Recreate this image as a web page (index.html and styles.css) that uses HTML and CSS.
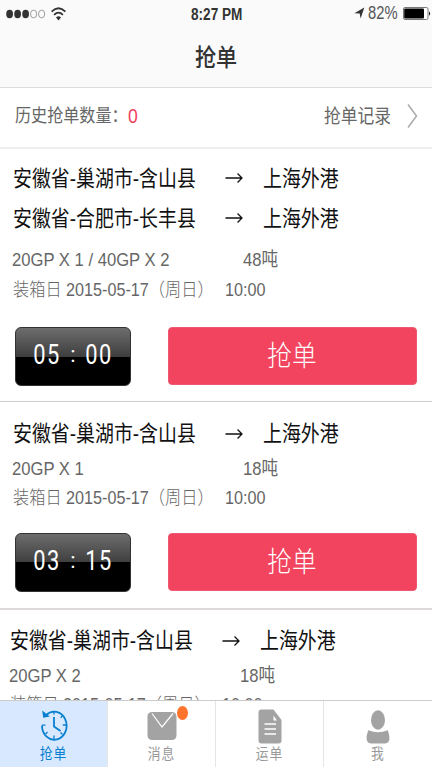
FILE: index.html
```html
<!DOCTYPE html>
<html lang="zh-CN">
<head>
<meta charset="utf-8">
<title>抢单</title>
<link rel="stylesheet" href="styles.css">
</head>
<body>
<div class="app">
  <header class="top">
    <div class="status">
      <div class="signal">
        <svg width="40" height="10" viewBox="0 0 40 10"><g fill="#333"><ellipse cx="3.6" cy="5" rx="3.4" ry="4.2"/><ellipse cx="11.6" cy="5" rx="3.4" ry="4.2"/><ellipse cx="19.6" cy="5" rx="3.4" ry="4.2"/></g><g fill="none" stroke="#777" stroke-width=".7"><ellipse cx="27.6" cy="5" rx="3.1" ry="3.9"/><ellipse cx="35.6" cy="5" rx="3.1" ry="3.9"/></g></svg>
        <svg class="wifi" width="15" height="14" viewBox="0 0 15 14"><g fill="none" stroke="#333" stroke-width="1.8"><path d="M.6 4.6Q7.5-2.2 14.4 4.6"/><path d="M3.1 7.8Q7.5 3.4 11.9 7.8"/></g><path d="M5 10.4Q7.5 8.3 10 10.4L7.5 13.6Z" fill="#333"/></svg>
      </div>
      <div class="clock"><span class="t">8:27 PM</span></div>
      <div class="power">
        <svg width="11" height="12" viewBox="0 0 11 12"><path d="M.4 6.2 10.3.5 6.6 11.5 5.7 6.4Z" fill="#333"/></svg>
        <span class="t percent">82%</span>
        <svg class="battery" width="28" height="13" viewBox="0 0 28 13"><rect x=".5" y=".5" width="24.5" height="12" rx="1.5" fill="#fff" stroke="#777"/><rect x="1.2" y="1.4" width="19.8" height="10.2" rx="1"/><path d="M26 4.2Q28.2 6.5 26 8.8Z" fill="#111"/></svg>
      </div>
    </div>
    <h1><span class="t">抢单</span></h1>
  </header>
  <section class="history">
    <span class="t count">历史抢单数量：</span><b class="t">0</b>
    <span class="t record">抢单记录</span>
    <svg width="11" height="26" viewBox="0 0 11 26"><path d="M1 1.5 9.5 13 1 24.5" fill="none" stroke="#aaa" stroke-width="1.5"/></svg>
  </section>
  <main>
    <article class="card first">
      <div class="route"><span class="t">安徽省-巢湖市-含山县</span><svg width="18" height="12" viewBox="0 0 18 12"><path d="M.5 6H17M12.5 1.5 17 6 12.5 10.5" fill="none" stroke="#111" stroke-width="1.3"/></svg><span class="t">上海外港</span></div>
      <div class="route"><span class="t">安徽省-合肥市-长丰县</span><svg width="18" height="12" viewBox="0 0 18 12"><path d="M.5 6H17M12.5 1.5 17 6 12.5 10.5" fill="none" stroke="#111" stroke-width="1.3"/></svg><span class="t">上海外港</span></div>
      <div class="load"><span class="t">20GP X 1 / 40GP X 2</span><span class="t">48吨</span></div>
      <div class="date"><span class="t">装箱日 2015-05-17（周日）</span><span class="t">10:00</span></div>
      <div class="actions"><div class="timer"><span>05</span><i>:</i><span>00</span></div><button><span class="t">抢单</span></button></div>
    </article>
    <article class="card">
      <div class="route"><span class="t">安徽省-巢湖市-含山县</span><svg width="18" height="12" viewBox="0 0 18 12"><path d="M.5 6H17M12.5 1.5 17 6 12.5 10.5" fill="none" stroke="#111" stroke-width="1.3"/></svg><span class="t">上海外港</span></div>
      <div class="load"><span class="t">20GP X 1</span><span class="t">18吨</span></div>
      <div class="date"><span class="t">装箱日 2015-05-17（周日）</span><span class="t">10:00</span></div>
      <div class="actions"><div class="timer"><span>03</span><i>:</i><span>15</span></div><button><span class="t">抢单</span></button></div>
    </article>
    <article class="card last">
      <div class="route"><span class="t">安徽省-巢湖市-含山县</span><svg width="18" height="12" viewBox="0 0 18 12"><path d="M.5 6H17M12.5 1.5 17 6 12.5 10.5" fill="none" stroke="#111" stroke-width="1.3"/></svg><span class="t">上海外港</span></div>
      <div class="load"><span class="t">20GP X 2</span><span class="t">18吨</span></div>
      <div class="date"><span class="t">装箱日 2015-05-17（周日）</span><span class="t">10:00</span></div>
    </article>
  </main>
  <nav>
    <a class="tab active"><svg width="28" height="32" viewBox="0 0 28 32"><g fill="none" stroke="#087fd0" stroke-width="1.8"><path d="M2 16.5A12.3 14 0 1 0 6.2 6.2"/><path d="M14 8V17.5L20.5 22"/></g><path d="M2.2 1.6 3.2 8.8 9.8 7.6Z" fill="#087fd0"/><path d="M14 2V5.5M26 16H22.8M14 30V26.5M2 16.2H5.5M5.5 25 7.5 23M22.5 25.5 20.5 23.5M22.5 6.5 20.8 8.8" stroke="#087fd0" stroke-width="1.3"/></svg><span class="t">抢单</span></a>
    <a class="tab"><div class="mail"><svg width="30" height="30" viewBox="0 0 30 30"><rect x=".5" y="1" width="29" height="28" rx="4.5" fill="#a3a3a3"/><path d="M5 2.5 15 16 26 2.5" fill="none" stroke="#fff" stroke-width="1.2"/></svg><i class="badge"></i></div><span class="t">消息</span></a>
    <a class="tab"><svg width="24" height="35" viewBox="0 0 24 35"><path d="M3.5.5H15.5L23.5 11V31.5Q23.5 34.5 20.5 34.5H3.5Q.5 34.5.5 31.5V3.5Q.5.5 3.5.5Z" fill="#a3a3a3"/><path d="M15.5 6.5V11.5H19Z" fill="#fff"/><path d="M6.5 15H18M6.5 20H18M6.5 25H18" stroke="#fff" stroke-width="1.5"/></svg><span class="t">运单</span></a>
    <a class="tab"><svg width="24" height="34" viewBox="0 0 24 34"><g fill="#a3a3a3"><ellipse cx="12" cy="10" rx="7" ry="9.7"/><path d="M2.2 20.2Q12 24.5 21.8 20.2Q24.5 28 22.8 31.3Q21.5 33.5 19 33.5H5Q2.5 33.5 1.2 31.3Q-.5 28 2.2 20.2Z"/></g></svg><span class="t">我</span></a>
  </nav>
</div>
</body>
</html>
```
FILE: styles.css
```css
* { box-sizing: border-box; }
body { margin: 0; font-family: "Liberation Sans", "Noto Sans CJK SC", sans-serif; color: #666; }
svg { display: block; flex: none; }
.app { width: 432px; height: 767px; overflow: hidden; display: flex; flex-direction: column; background: #fff; }
.t { display: block; white-space: nowrap; line-height: 1; transform: scaleX(.88); transform-origin: left center; }

.top { height: 88px; flex: none; background: #fafafa; border-bottom: 1px solid #ddd; }
.status { height: 28px; display: grid; grid-template-columns: 1fr 60px 1fr; align-items: center; }
.signal { display: flex; align-items: center; gap: 5px; padding-left: 6px; }
.clock { padding: 1px 0 0 5px; font-size: 16px; font-weight: bold; color: #333; }
.clock .t { transform: scaleX(.85); }
.power { display: flex; align-items: center; justify-content: flex-end; padding: 0 1px 2px 0; color: #555; }
.percent { font-size: 18px; width: 30px; margin: 0 5px 0 3px; transform: scaleX(.82); }
h1 { margin: 0; height: 56px; display: flex; align-items: center; justify-content: center; font-size: 24px; font-weight: 500; color: #333; font-family: "Noto Sans CJK SC", sans-serif; }
h1 .t { transform-origin: center; margin-top: -1px; }

.history { height: 61px; flex: none; display: flex; align-items: center; padding: 0 14px 4px 15px; border-bottom: 2px solid #eee; font-size: 18.3px; }
.count { width: 113px; }
.history b { font-size: 20px; font-weight: normal; color: #f2405f; flex: 1; }
.record { width: 83px; font-size: 19px; }
.count, .record { margin-top: 2px; }

main { flex: 1; min-height: 0; overflow: hidden; }
.card { padding: 14px 0 16px 12px; border-bottom: 2px solid #ddd8da; }
.first { padding: 10px 0 15px 12px; border-bottom-width: 1px; border-color: #cfcacc; }
.last { padding: 13px 0 0 9px; border: 0; }
.route { display: grid; grid-template-columns: 212px 38px 1fr; align-items: center; height: 36px; padding-left: 1px; font-size: 21.5px; color: #111; }
.route .t { margin-top: 2px; }
.first .route { height: 40px; }
.first .route svg { margin-top: -2px; }
.load { display: grid; grid-template-columns: 231px 1fr; align-items: center; height: 32px; font-size: 19px; }
.first .load { height: 42px; padding-bottom: 1px; }
.date { display: grid; grid-template-columns: 212px 1fr; align-items: center; height: 28px; padding-left: 1px; font-size: 18.5px; font-weight: 300; }
.first .date { height: 18px; }
.load .t, .date .t { transform: scaleX(.875); }

.actions { display: flex; gap: 37px; padding: 21px 15px 0 3px; }
.first .actions { padding-top: 28px; }
.timer { width: 116px; height: 59px; padding-bottom: 3px; border-radius: 6px; border: 1px solid #333; background: linear-gradient(#6d6d6d 0, #3e3e3e 50%, #000 50%); display: flex; justify-content: center; align-items: center; color: #fff; font: 28px/1 Roboto, sans-serif; }
.timer span { width: 28px; transform: scaleX(.78); letter-spacing: 2px; white-space: nowrap; display: flex; justify-content: center; }
.timer i { width: 24px; font-style: normal; font-size: 22px; text-align: center; }
button { flex: 1; height: 58px; border: 1px solid #ee5872; border-radius: 4px; background: #f2445e; color: #fff; padding: 0; display: flex; justify-content: center; align-items: center; font: 300 28px "Noto Sans CJK SC", sans-serif; }
button .t { transform-origin: center; margin-top: -4px; }

nav { flex: none; height: 67px; display: grid; grid-template-columns: repeat(4, 1fr); border-top: 1px solid #ccc; }
.tab { border-right: 1px solid #e5e5e5; display: flex; flex-direction: column; align-items: center; justify-content: flex-end; color: #999; font-size: 14.5px; letter-spacing: 1px; }
.tab:last-child { border: 0; }
.tab .t { height: 22px; line-height: 22px; margin-bottom: 2px; transform-origin: center; }
.tab > svg { margin-bottom: -1px; }
.active { background: #d8e9ff; color: #087fd0; }
.active > svg { margin-bottom: 2px; }
.mail { position: relative; margin-bottom: 2px; }
.badge { position: absolute; left: 30px; top: -5px; width: 11px; height: 14px; border-radius: 50%; background: #ff742c; }
```
